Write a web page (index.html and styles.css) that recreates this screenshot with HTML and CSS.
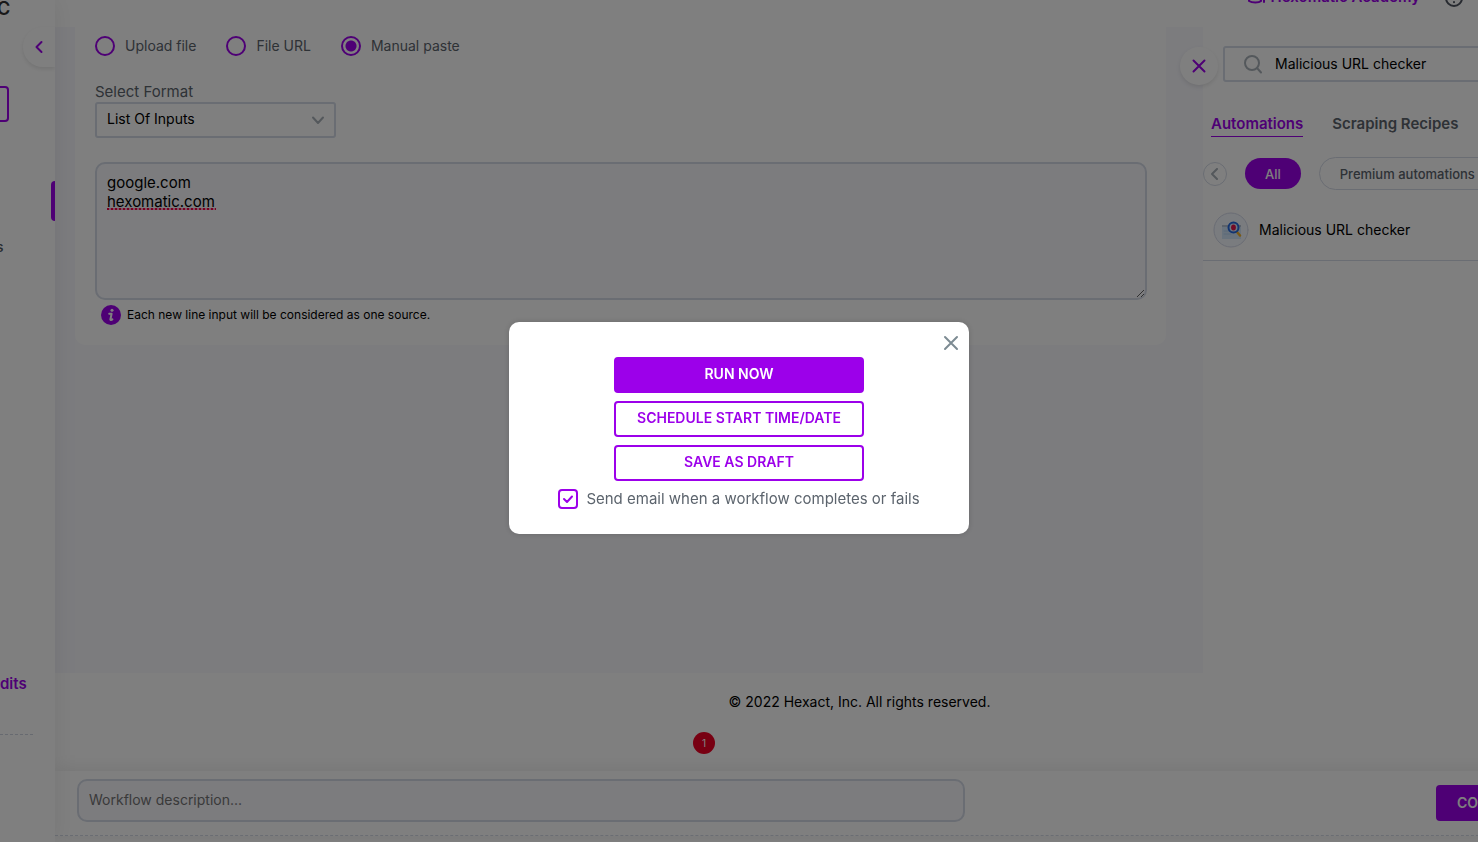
FILE: index.html
```html
<!DOCTYPE html>
<html lang="en">
<head>
  <meta charset="UTF-8">
  <meta name="viewport" content="width=device-width, initial-scale=1.0">
  <title>Hexomatic</title>
  <link rel="stylesheet" href="styles.css">
</head>
<body>
  <div class="app">
    <aside class="sidebar">
      <div class="logo">C</div>
      <button class="collapse" type="button" aria-label="Collapse menu">
        <svg width="8" height="14" viewBox="0 0 8 14"><path d="M6.500 2L1.500 7L6.500 12"/></svg>
      </button>
      <div class="new-box"></div>
      <div class="active-mark"></div>
      <div class="side-item">s</div>
      <a class="credits" href="#">dits</a>
      <div class="side-line"></div>
    </aside>

    <div class="page">
      <header class="header">
        <div class="header-inner">
          <a class="academy" href="#">
            <svg width="20" height="18" viewBox="0 0 20 18"><path d="M1 5L9 1L17 5L9 9ZM2 7V13C5 15 12 15 14 13V7M17 6V14"/></svg>
            Hexomatic Academy
          </a>
          <svg class="help" width="20" height="20" viewBox="0 0 20 20"><circle cx="10" cy="11" r="8"/><path d="M7.500 8C7.500 4.500 12.500 4.500 12.500 8C12.500 9.500 10 9 10 10.500M10 15V15.200"/></svg>
        </div>
      </header>

      <div class="workspace">
        <main class="canvas">
          <section class="card">
            <div class="sources">
              <label class="radio"><input type="radio" name="source">Upload file</label>
              <label class="radio"><input type="radio" name="source">File URL</label>
              <label class="radio"><input type="radio" name="source" checked>Manual paste</label>
            </div>
            <label class="field-label" for="format">Select Format</label>
            <div class="select-wrap">
              <select id="format"><option>List Of Inputs</option></select>
              <svg width="14" height="9" viewBox="0 0 14 9"><path d="M2 1.500L7 7L12 1.500"/></svg>
            </div>
            <div class="paste">
              <textarea aria-label="Inputs" spellcheck="false">google.com
hexomatic.com</textarea>
              <span class="spell"></span>
            </div>
            <p class="note">
              <svg width="20" height="20" viewBox="0 0 20 20"><circle class="note-disc" cx="10" cy="10" r="10"/><circle class="note-dot" cx="11" cy="5.200" r="1.500"/><path d="M8.200 8.700H10.600L9.400 14.500C9.400 15.200 10.500 15 11.400 14.400"/></svg>
              Each new line input will be considered as one source.
            </p>
          </section>
        </main>

        <aside class="panel">
          <button class="panel-close" type="button" aria-label="Close panel">
            <svg width="14" height="14" viewBox="0 0 14 14"><path d="M1.500 1.500L12.500 12.500M12.500 1.500L1.500 12.500"/></svg>
          </button>
          <div class="search">
            <svg width="20" height="20" viewBox="0 0 20 20"><circle cx="9" cy="9" r="7"/><path d="M14 14L18 18.500"/></svg>
            <input type="text" aria-label="Search" value="Malicious URL checker">
          </div>
          <nav class="tabs">
            <a class="tab active" href="#">Automations</a>
            <a class="tab" href="#">Scraping Recipes</a>
          </nav>
          <div class="filters">
            <button class="prev" type="button" aria-label="Previous">
              <svg width="8" height="12" viewBox="0 0 8 12"><path d="M6 1L1 6L6 11"/></svg>
            </button>
            <button class="pill selected" type="button">All</button>
            <button class="pill" type="button">Premium automations</button>
          </div>
          <div class="result">
            <svg width="36" height="36" viewBox="0 0 36 36">
              <circle cx="18" cy="18" r="17" fill="#f4f8ff" stroke="#d4d9e8"/>
              <path d="M9 14H28V27H9Z" fill="#d3e6fa"/>
              <path d="M9 13H28V15H9Z" fill="#b9c4d4"/>
              <path d="M11 19H16M11 22H18" stroke="#b4d3f4"/>
              <path d="M24 20L27 23.500" stroke="#f4b22b" stroke-width="2.500"/>
              <circle cx="20.500" cy="15.500" r="5" fill="#d9ecff" stroke="#2469e0" stroke-width="2"/>
              <ellipse cx="20.500" cy="15.500" rx="2.400" ry="3" fill="#e3174b"/>
            </svg>
            Malicious URL checker
          </div>
        </aside>
      </div>

      <footer class="footer">© 2022 Hexact, Inc. All rights reserved.</footer>
      <div class="bottom-bar">
        <span class="badge">1</span>
        <input class="description" type="text" aria-label="Workflow description" placeholder="Workflow description...">
        <button class="continue" type="button">CO</button>
      </div>
    </div>
  </div>

  <div class="overlay">
    <div class="modal" role="dialog" aria-label="Run workflow">
      <button class="modal-close" type="button" aria-label="Close">
        <svg width="16" height="16" viewBox="0 0 16 16"><path d="M2 2L14 14M14 2L2 14"/></svg>
      </button>
      <button class="btn primary" type="button">RUN NOW</button>
      <button class="btn" type="button">SCHEDULE START TIME/DATE</button>
      <button class="btn" type="button">SAVE AS DRAFT</button>
      <label class="check">
        <span class="check-box">
          <input type="checkbox" checked>
          <svg width="12" height="10" viewBox="0 0 12 10"><path d="M2 5L5 8L10 2.500"/></svg>
        </span>
        Send email when a workflow completes or fails
      </label>
    </div>
  </div>
</body>
</html>
```
FILE: styles.css
```css
* { box-sizing: border-box; margin: 0; padding: 0; }

body {
  height: 100vh;
  overflow: hidden;
  font-family: Inter, "Open Sans", sans-serif;
  font-size: 14px;
  line-height: 20px;
  color: #000;
  background: #fff;
}

button, input, select, textarea { font: inherit; color: inherit; }
button { border: none; background: none; cursor: pointer; }
a { text-decoration: none; color: inherit; }
svg { flex: none; fill: none; stroke-linecap: round; stroke-linejoin: round; }

/* App frame, the page is wider than the window */
.app {
  display: flex;
  width: calc(100% + 186px);
  height: 100vh;
}

/* Sidebar */
.sidebar {
  display: flex;
  flex-direction: column;
  align-items: flex-start;
  flex: none;
  width: 55px;
  overflow: hidden;
  background: #fff;
  box-shadow: 0 0 24px rgba(0, 0, 0, 0.08);
  z-index: 2;
}
.logo {
  height: 27px;
  margin-left: -3px;
  font-size: 18px;
  line-height: 18px;
  font-weight: 600;
  color: #333;
}
.collapse {
  display: flex;
  align-items: center;
  align-self: flex-end;
  flex: none;
  width: 32px;
  height: 40px;
  padding-left: 12px;
  border-radius: 20px 0 0 20px;
  box-shadow: 0 2px 4px rgba(0, 0, 0, 0.1);
}
.collapse svg { stroke: #9c00ea; stroke-width: 2; }
.new-box {
  width: 9px;
  height: 36px;
  margin-top: 19px;
  border: 2px solid #9c00ea;
  border-left: none;
  border-radius: 0 4px 4px 0;
}
.active-mark {
  align-self: flex-end;
  width: 4px;
  height: 40px;
  margin-top: 59px;
  border-radius: 4px 0 0 4px;
  background: #9c00ea;
}
.side-item {
  margin: 16px 0 0 -4px;
  font-weight: 500;
  color: #4e5560;
}
.credits {
  margin-top: auto;
  font-size: 15px;
  font-weight: 600;
  color: #9c00ea;
}
.side-line {
  width: 33px;
  margin: 40px 0 107px;
  border-top: 1px dashed #cfd4e0;
}

/* Header */
.page {
  display: flex;
  flex-direction: column;
  flex: 1;
  min-width: 0;
}
.header {
  display: flex;
  flex: none;
  align-items: flex-end;
  justify-content: flex-end;
  height: 27px;
  overflow: hidden;
}
.header-inner {
  display: flex;
  align-items: center;
  gap: 24px;
  height: 60px;
  padding-right: 200px;
}
.academy {
  display: flex;
  align-items: center;
  gap: 4px;
  font-size: 15px;
  font-weight: 600;
  color: #9c00ea;
}
.academy svg { stroke: #9c00ea; stroke-width: 2; }
.help { stroke: #4e5560; stroke-width: 2; }

/* Workspace */
.workspace {
  display: flex;
  flex: 1;
}
.canvas {
  flex: 1;
  padding: 0 37px 0 20px;
  background: #f8f8fd;
}
.card {
  padding: 9px 19px 20px 20px;
  border-radius: 0 0 10px 10px;
  background: #fff;
}
.sources {
  display: flex;
  gap: 30px;
}
.radio {
  display: flex;
  align-items: center;
  gap: 10px;
  color: #5c646d;
}
.radio input {
  appearance: none;
  width: 20px;
  height: 20px;
  border: 2px solid #9c00ea;
  border-radius: 50%;
}
.radio input:checked {
  background: radial-gradient(circle, #9c00ea 5px, #fff 6px);
}
.field-label {
  display: block;
  margin-top: 26px;
  font-size: 15px;
  color: #5c646d;
}
.select-wrap {
  display: flex;
  align-items: center;
  width: 241px;
  height: 36px;
}
.select-wrap select {
  appearance: none;
  width: 100%;
  height: 36px;
  padding: 0 10px 2px;
  border: 2px solid #d4dae6;
  border-radius: 3px;
  background: #fff;
}
.select-wrap svg {
  margin-left: -25px;
  stroke: #a9b1b8;
  stroke-width: 2;
  pointer-events: none;
}
.paste {
  position: relative;
  height: 138px;
  margin-top: 24px;
}
.paste textarea {
  display: block;
  width: 100%;
  height: 138px;
  padding: 9px 10px;
  border: 2px solid #d4dae6;
  border-radius: 10px;
  font-size: 15px;
  line-height: 19px;
  background: #f8f8fd;
}
/* Spelling mark under the second line */
.spell {
  position: absolute;
  left: 12px;
  top: 46px;
  width: 109px;
  height: 2px;
  background: repeating-linear-gradient(90deg, #f00048 0 2px, #f8a8c0 2px 4px);
}
.note {
  display: flex;
  align-items: center;
  gap: 6px;
  margin: 5px 0 0 6px;
  font-size: 12px;
}
.note-disc { fill: #9c00ea; }
.note-dot { fill: #fff; }
.note path { stroke: #fff; stroke-width: 2; }

/* Right panel */
.panel {
  position: relative;
  flex: none;
  width: 461px;
  padding: 19px 20px 0 0;
  background: #fff;
}
.panel-close {
  position: absolute;
  left: -23px;
  top: 20px;
  display: flex;
  align-items: center;
  justify-content: center;
  width: 38px;
  height: 38px;
  border-radius: 50%;
  background: #fff;
  box-shadow: 0 2px 4px rgba(0, 0, 0, 0.1);
}
.panel-close svg { stroke: #9c00ea; stroke-width: 2; }
.search {
  display: flex;
  align-items: center;
  gap: 12px;
  height: 36px;
  margin-left: 20px;
  padding-left: 18px;
  border: 2px solid #d4dae6;
  border-radius: 3px;
}
.search svg { stroke: #a9b1b8; stroke-width: 2; }
.search input {
  flex: 1;
  border: none;
  outline: none;
  background: none;
}
.tabs {
  display: flex;
  gap: 29px;
  margin: 32px 0 0 8px;
}
.tab {
  height: 23px;
  font-size: 15px;
  font-weight: 600;
  color: #5c646d;
}
.tab.active {
  color: #9c00ea;
  border-bottom: 1px solid #9c00ea;
}
.filters {
  display: flex;
  align-items: center;
  gap: 18px;
  margin-top: 20px;
}
.prev {
  display: flex;
  align-items: center;
  justify-content: center;
  width: 24px;
  height: 24px;
  border: 1px solid #d4dae6;
  border-radius: 50%;
}
.prev svg { stroke: #a9b1b8; stroke-width: 2; }
.pill {
  height: 33px;
  padding: 0 20px;
  border: 1px solid #d4dae6;
  border-radius: 17px;
  font-size: 13px;
  font-weight: 500;
  color: #5c646d;
}
.pill.selected {
  height: 31px;
  border: none;
  color: #fff;
  background: #9c00ea;
}
.result {
  display: flex;
  align-items: center;
  gap: 10px;
  height: 71px;
  padding: 10px 0 0 10px;
  border-bottom: 1px solid #d4dae6;
}

/* Footer and bottom bar */
.footer {
  flex: none;
  height: 98px;
  padding-top: 19px;
  text-align: center;
}
.bottom-bar {
  position: relative;
  display: flex;
  align-items: flex-start;
  justify-content: space-between;
  flex: none;
  height: 65px;
  margin-bottom: 6px;
  padding: 8px 84px 0 22px;
  border-bottom: 1px dashed #d4dae6;
  background: #fff;
  box-shadow: 0 -2px 16px rgba(0, 0, 0, 0.08);
}
.description {
  width: 888px;
  height: 43px;
  padding: 0 10px 2px;
  border: 2px solid #d4dae6;
  border-radius: 10px;
  background: #f8f8fd;
}
.description::placeholder { color: #757575; }
.badge {
  position: absolute;
  left: 638px;
  top: -39px;
  width: 22px;
  height: 22px;
  border-radius: 50%;
  font-size: 10px;
  line-height: 22px;
  text-align: center;
  color: #fff;
  background: #f00024;
}
.continue {
  width: 144px;
  height: 36px;
  margin-top: 6px;
  padding-left: 21px;
  border-radius: 4px;
  font-weight: 600;
  text-align: left;
  color: #fff;
  background: #9c00ea;
}

/* Modal */
.overlay {
  position: fixed;
  inset: 0;
  display: flex;
  align-items: center;
  justify-content: center;
  padding-top: 14px;
  background: rgba(0, 0, 0, 0.5);
  z-index: 10;
}
.modal {
  position: relative;
  display: flex;
  flex-direction: column;
  align-items: center;
  gap: 8px;
  width: 460px;
  padding: 35px 20px 25px;
  border-radius: 10px;
  background: #fff;
  box-shadow: 0 0 6px rgba(0, 0, 0, 0.16);
}
.modal-close {
  position: absolute;
  right: 10px;
  top: 13px;
  width: 16px;
  height: 16px;
}
.modal-close svg { display: block; stroke: #7d8b93; stroke-width: 2; }
.btn {
  width: 250px;
  height: 36px;
  padding-bottom: 2px;
  border: 2px solid #9c00ea;
  border-radius: 4px;
  font-weight: 600;
  color: #9c00ea;
}
.btn.primary {
  color: #fff;
  background: #9c00ea;
}
.check {
  display: flex;
  align-items: center;
  gap: 8px;
  font-size: 15px;
  color: #5c646d;
}
.check-box {
  display: grid;
  place-items: center;
}
.check-box input, .check-box svg { grid-area: 1 / 1; }
.check-box input {
  appearance: none;
  width: 20px;
  height: 20px;
  border: 2px solid #9c00ea;
  border-radius: 4px;
}
.check-box svg { stroke: #9c00ea; stroke-width: 2; pointer-events: none; }
```
